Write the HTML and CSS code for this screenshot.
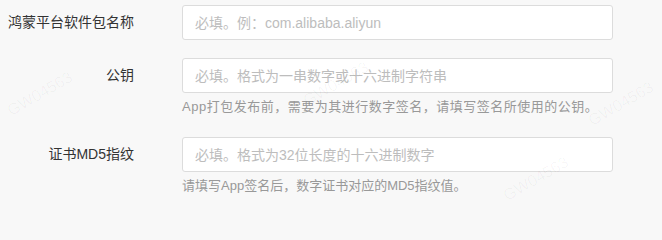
FILE: index.html
```html
<!DOCTYPE html>
<html lang="zh-CN">
<head>
<meta charset="utf-8">
<link rel="stylesheet" href="styles.css">
</head>
<body>
<form class="form">
  <div class="item">
    <label class="label">鸿蒙平台软件包名称</label>
    <div class="control">
      <input class="input" type="text" placeholder="必填。例：com.alibaba.aliyun">
    </div>
  </div>
  <div class="item">
    <label class="label">公钥</label>
    <div class="control">
      <input class="input" type="text" placeholder="必填。格式为一串数字或十六进制字符串">
      <div class="help help-wide">App打包发布前，需要为其进行数字签名，请填写签名所使用的公钥。</div>
    </div>
  </div>
  <div class="item">
    <label class="label">证书MD5指纹</label>
    <div class="control">
      <input class="input" type="text" placeholder="必填。格式为32位长度的十六进制数字">
      <div class="help">请填写App签名后，数字证书对应的MD5指纹值。</div>
    </div>
  </div>
</form>
<div class="wm wm1">GW04563</div>
<div class="wm wm2">GW04563</div>
<div class="wm wm3">GW04563</div>
<div class="wm wm4">GW04563</div>
</body>
</html>
```
FILE: styles.css
```css
html, body {
  margin: 0;
  padding: 0;
  background: #f8f8f8;
}
body {
  font-family: "Liberation Sans", "Noto Sans CJK SC", sans-serif;
  position: relative;
  height: 200px;
  overflow: hidden;
}
.form {
  padding-top: 5px;
}
.item {
  display: flex;
  align-items: flex-start;
  margin-bottom: 18px;
}
.label {
  width: 134px;
  flex: none;
  text-align: right;
  font-size: 14px;
  color: #333;
  line-height: 35px;
  height: 35px;
  white-space: nowrap;
  margin-right: 48px;
}
.control {
  width: 431px;
  flex: none;
}
.input {
  display: block;
  box-sizing: border-box;
  width: 431px;
  height: 35px;
  margin: 0;
  padding: 0 12px;
  border: 1px solid #dcdcdc;
  border-radius: 3px;
  background: #fff;
  font-family: "Liberation Sans", "Noto Sans CJK SC", sans-serif;
  font-size: 14px;
  color: #333;
  outline: none;
}
.input::placeholder {
  color: #bdbdbd;
}
.help {
  margin-top: 2px;
  line-height: 24px;
  font-size: 13px;
  color: #999;
  white-space: nowrap;
}
.help-wide {
  letter-spacing: 0.5px;
}
.wm {
  position: absolute;
  font-size: 16px;
  color: rgba(0, 0, 0, 0.035);
  transform: rotate(-30deg);
  pointer-events: none;
  white-space: nowrap;
}
.wm1 { left: 4px; top: 85px; }
.wm2 { left: 300px; top: 75px; }
.wm3 { left: 585px; top: 95px; }
.wm4 { left: 500px; top: 170px; }
```
